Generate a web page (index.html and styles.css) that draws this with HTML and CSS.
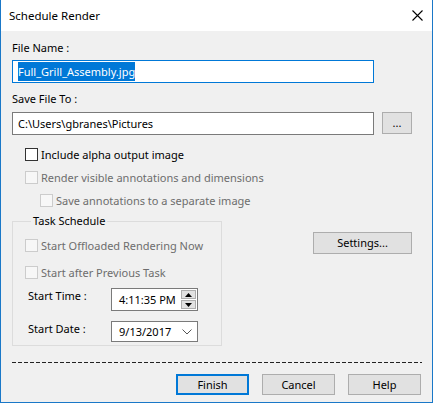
FILE: index.html
```html
<!DOCTYPE html>
<html>
<head>
<meta charset="utf-8">
<link rel="stylesheet" href="styles.css">
</head>
<body>
<div class="window">
  <div class="titlebar">
    <span class="title">Schedule Render</span>
    <svg class="close" width="11" height="11" viewBox="0 0 11 11"><path d="M0.5 0.5 L10.5 10.5 M10.5 0.5 L0.5 10.5" stroke="#000" stroke-width="1.1" fill="none"/></svg>
  </div>
  <div class="content">
    <div class="label">File Name :</div>
    <div class="textbox focused"><span class="sel">Full_Grill_Assembly.jpg</span></div>
    <div class="label label-save">Save File To :</div>
    <div class="path-row">
      <div class="textbox path">C:\Users\gbranes\Pictures</div>
      <div class="btn btn-dots">...</div>
    </div>
    <div class="check-row first"><span class="box"></span><span>Include alpha output image</span></div>
    <div class="check-row disabled"><span class="box"></span><span>Render visible annotations and dimensions</span></div>
    <div class="check-row disabled indent"><span class="box"></span><span>Save annotations to a separate image</span></div>
    <div class="task-row">
      <fieldset class="group">
        <legend>Task Schedule</legend>
        <div class="check-row disabled g1"><span class="box"></span><span>Start Offloaded Rendering Now</span></div>
        <div class="check-row disabled g2"><span class="box"></span><span>Start after Previous Task</span></div>
        <div class="field-row time-row">
          <span class="field-label">Start Time :</span>
          <div class="picker time">
            <span>4:11:35 PM</span>
            <div class="spin">
              <div class="spin-btn"><svg width="7" height="4" viewBox="0 0 7 4"><path d="M3.5 0 L7 4 L0 4 Z" fill="#000"/></svg></div>
              <div class="spin-btn"><svg width="7" height="4" viewBox="0 0 7 4"><path d="M0 0 L7 0 L3.5 4 Z" fill="#000"/></svg></div>
            </div>
          </div>
        </div>
        <div class="field-row date-row">
          <span class="field-label">Start Date :</span>
          <div class="picker date">
            <span>9/13/2017</span>
            <svg class="chev" width="10" height="6" viewBox="0 0 10 6"><path d="M0.5 0.5 L5 5 L9.5 0.5" stroke="#555" stroke-width="1" fill="none"/></svg>
          </div>
        </div>
      </fieldset>
      <div class="btn btn-settings">Settings...</div>
    </div>
    <div class="dashes"></div>
    <div class="buttons">
      <div class="btn btn-main default">Finish</div>
      <div class="btn btn-main">Cancel</div>
      <div class="btn btn-main">Help</div>
    </div>
  </div>
</div>
</body>
</html>
```

FILE: styles.css
```css
* { box-sizing: border-box; }
html, body { margin: 0; padding: 0; background: #f0f0f0; }
body {
  font-family: "Noto Sans", "Open Sans", sans-serif;
  font-size: 11px;
  color: #000;
}
.window {
  width: 433px;
  height: 403px;
  border: 1px solid #1a78c8;
  border-top: none;
  background: #f0f0f0;
  overflow: hidden;
}
.titlebar {
  height: 31px;
  background: #fff;
  display: flex;
  align-items: center;
  justify-content: space-between;
  padding-left: 8px;
  padding-right: 9px;
}
.title { font-size: 11.5px; line-height: 16px; }
.close { display: block; }
.content { padding: 9px 0 0 11px; }
.label { line-height: 16px; height: 16px; }
.label-save { margin-top: 8px; }
.textbox {
  width: 362px;
  height: 23px;
  background: #fff;
  border: 1px solid #7a7a7a;
  padding-left: 5px;
  line-height: 21px;
  white-space: nowrap;
}
.textbox.focused { border-color: #0078d7; margin-top: 4px; }
.sel { background: #0078d7; color: #fff; padding: 2px 0; }
.path-row { display: flex; margin-top: 5px; }
.btn {
  background: #e1e1e1;
  border: 1px solid #adadad;
  display: flex;
  align-items: center;
  justify-content: center;
  line-height: 16px;
}
.btn-dots { width: 30px; height: 22px; margin-left: 8px; }
.check-row {
  display: flex;
  align-items: center;
  height: 13px;
  margin-top: 10px;
  padding-left: 13px;
  line-height: 13px;
  white-space: nowrap;
}
.check-row.first { margin-top: 13px; }
.check-row.indent { padding-left: 28px; }
.box {
  width: 13px;
  height: 13px;
  border: 1px solid #333;
  background: #fff;
  margin-right: 3px;
  flex: none;
}
.disabled { color: #6d6d6d; }
.disabled .box { border-color: #cccccc; background: #f7f7f7; }
.task-row { display: flex; align-items: flex-start; margin-top: 6px; }
.group {
  width: 210px;
  height: 133px;
  margin: 0;
  padding: 0 0 0 12px;
  border: 1px solid #dcdcdc;
  min-width: 0;
}
.group legend {
  padding: 0 2px;
  margin-left: 6px;
  line-height: 16px;
}
.group .check-row { padding-left: 0; }
.group .g1 { margin-top: 10px; }
.group .g2 { margin-top: 14px; }
.field-row { display: flex; align-items: flex-start; padding-left: 3px; }
.time-row { margin-top: 9px; }
.date-row { margin-top: 10px; }
.field-label { width: 83px; line-height: 16px; padding-top: 0; }
.picker {
  width: 87px;
  background: #fff;
  border: 1px solid #7a7a7a;
  display: flex;
  align-items: center;
  padding-left: 7px;
  white-space: nowrap;
}
.time { height: 23px; }
.date { height: 21px; }
.spin { margin-left: auto; margin-right: 1px; display: flex; flex-direction: column; gap: 1px; }
.spin-btn {
  width: 15px;
  height: 9px;
  background: #e1e1e1;
  border: 1px solid #adadad;
  display: flex;
  align-items: center;
  justify-content: center;
}
.spin-btn svg { display: block; }
.chev { margin-left: auto; margin-right: 5px; }
.btn-settings { width: 99px; height: 22px; margin-left: 91px; margin-top: 19px; }
.dashes {
  width: 410px;
  height: 1px;
  margin-top: 16px;
  background: repeating-linear-gradient(90deg, #222 0 4px, transparent 4px 6px);
}
.buttons { display: flex; justify-content: flex-end; width: 409px; margin-top: 11px; gap: 13px; }
.btn-main { width: 73px; height: 21px; }
.btn-main.default { border: 2px solid #0078d7; }
```
